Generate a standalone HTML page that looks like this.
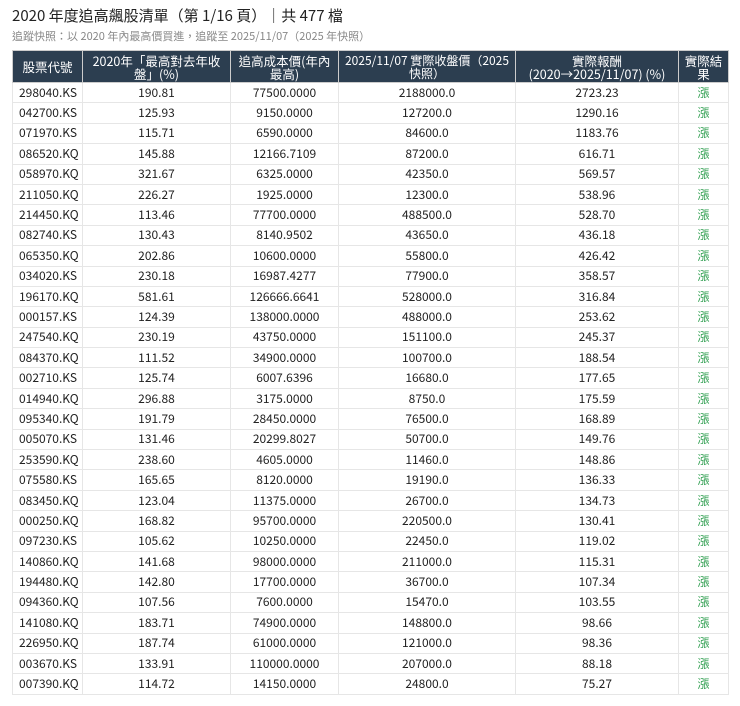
<!DOCTYPE html>
<html><head><meta charset="utf-8"><style>
body{margin:0;background:#fff;font-family:"Noto Sans CJK TC","Liberation Sans",sans-serif;color:#222;}
.t{position:absolute;left:12px;top:6px;font-size:15px;line-height:20px;color:#222;white-space:nowrap}
.s{position:absolute;left:12px;top:28px;font-size:11px;line-height:16px;color:#888;white-space:nowrap}
table{position:absolute;left:12px;top:50px;width:716px;border-collapse:collapse;font-size:12px;table-layout:fixed}
th{background:#2c3e50;color:#fff;font-weight:normal;height:32px;font-size:12.5px;line-height:13px;border:1px solid #ccc;padding:0;text-align:center;box-sizing:border-box;white-space:nowrap}
th.n{font-size:12px}
tr.r{height:20.4px}
td{border:1px solid #e6e6e6;text-align:center;padding:0;line-height:14px;box-sizing:border-box;overflow:hidden}
td:first-child{text-align:left;padding-left:6px}
td.g{color:#2e9e4f}
</style></head><body>
<div class="t">2020 年度追高飆股清單（第 1/16 頁）｜共 477 檔</div>
<div class="s">追蹤快照：以 2020 年內最高價買進，追蹤至 2025/11/07（2025 年快照）</div>
<table>
<colgroup><col style="width:70px"><col style="width:148px"><col style="width:108px"><col style="width:177px"><col style="width:163px"><col style="width:50px"></colgroup>
<tr><th>股票代號</th><th>2020年「最高對去年收<br>盤」(%)</th><th>追高成本價(年內<br>最高)</th><th class="n">2025/11/07 實際收盤價（2025<br>快照）</th><th>實際報酬<br>(2020→2025/11/07) (%)</th><th>實際結<br>果</th></tr>
<tr class="r"><td>298040.KS</td><td>190.81</td><td>77500.0000</td><td>2188000.0</td><td>2723.23</td><td class="g">漲</td></tr>
<tr class="r"><td>042700.KS</td><td>125.93</td><td>9150.0000</td><td>127200.0</td><td>1290.16</td><td class="g">漲</td></tr>
<tr class="r"><td>071970.KS</td><td>115.71</td><td>6590.0000</td><td>84600.0</td><td>1183.76</td><td class="g">漲</td></tr>
<tr class="r"><td>086520.KQ</td><td>145.88</td><td>12166.7109</td><td>87200.0</td><td>616.71</td><td class="g">漲</td></tr>
<tr class="r"><td>058970.KQ</td><td>321.67</td><td>6325.0000</td><td>42350.0</td><td>569.57</td><td class="g">漲</td></tr>
<tr class="r"><td>211050.KQ</td><td>226.27</td><td>1925.0000</td><td>12300.0</td><td>538.96</td><td class="g">漲</td></tr>
<tr class="r"><td>214450.KQ</td><td>113.46</td><td>77700.0000</td><td>488500.0</td><td>528.70</td><td class="g">漲</td></tr>
<tr class="r"><td>082740.KS</td><td>130.43</td><td>8140.9502</td><td>43650.0</td><td>436.18</td><td class="g">漲</td></tr>
<tr class="r"><td>065350.KQ</td><td>202.86</td><td>10600.0000</td><td>55800.0</td><td>426.42</td><td class="g">漲</td></tr>
<tr class="r"><td>034020.KS</td><td>230.18</td><td>16987.4277</td><td>77900.0</td><td>358.57</td><td class="g">漲</td></tr>
<tr class="r"><td>196170.KQ</td><td>581.61</td><td>126666.6641</td><td>528000.0</td><td>316.84</td><td class="g">漲</td></tr>
<tr class="r"><td>000157.KS</td><td>124.39</td><td>138000.0000</td><td>488000.0</td><td>253.62</td><td class="g">漲</td></tr>
<tr class="r"><td>247540.KQ</td><td>230.19</td><td>43750.0000</td><td>151100.0</td><td>245.37</td><td class="g">漲</td></tr>
<tr class="r"><td>084370.KQ</td><td>111.52</td><td>34900.0000</td><td>100700.0</td><td>188.54</td><td class="g">漲</td></tr>
<tr class="r"><td>002710.KS</td><td>125.74</td><td>6007.6396</td><td>16680.0</td><td>177.65</td><td class="g">漲</td></tr>
<tr class="r"><td>014940.KQ</td><td>296.88</td><td>3175.0000</td><td>8750.0</td><td>175.59</td><td class="g">漲</td></tr>
<tr class="r"><td>095340.KQ</td><td>191.79</td><td>28450.0000</td><td>76500.0</td><td>168.89</td><td class="g">漲</td></tr>
<tr class="r"><td>005070.KS</td><td>131.46</td><td>20299.8027</td><td>50700.0</td><td>149.76</td><td class="g">漲</td></tr>
<tr class="r"><td>253590.KQ</td><td>238.60</td><td>4605.0000</td><td>11460.0</td><td>148.86</td><td class="g">漲</td></tr>
<tr class="r"><td>075580.KS</td><td>165.65</td><td>8120.0000</td><td>19190.0</td><td>136.33</td><td class="g">漲</td></tr>
<tr class="r"><td>083450.KQ</td><td>123.04</td><td>11375.0000</td><td>26700.0</td><td>134.73</td><td class="g">漲</td></tr>
<tr class="r"><td>000250.KQ</td><td>168.82</td><td>95700.0000</td><td>220500.0</td><td>130.41</td><td class="g">漲</td></tr>
<tr class="r"><td>097230.KS</td><td>105.62</td><td>10250.0000</td><td>22450.0</td><td>119.02</td><td class="g">漲</td></tr>
<tr class="r"><td>140860.KQ</td><td>141.68</td><td>98000.0000</td><td>211000.0</td><td>115.31</td><td class="g">漲</td></tr>
<tr class="r"><td>194480.KQ</td><td>142.80</td><td>17700.0000</td><td>36700.0</td><td>107.34</td><td class="g">漲</td></tr>
<tr class="r"><td>094360.KQ</td><td>107.56</td><td>7600.0000</td><td>15470.0</td><td>103.55</td><td class="g">漲</td></tr>
<tr class="r"><td>141080.KQ</td><td>183.71</td><td>74900.0000</td><td>148800.0</td><td>98.66</td><td class="g">漲</td></tr>
<tr class="r"><td>226950.KQ</td><td>187.74</td><td>61000.0000</td><td>121000.0</td><td>98.36</td><td class="g">漲</td></tr>
<tr class="r"><td>003670.KS</td><td>133.91</td><td>110000.0000</td><td>207000.0</td><td>88.18</td><td class="g">漲</td></tr>
<tr class="r"><td>007390.KQ</td><td>114.72</td><td>14150.0000</td><td>24800.0</td><td>75.27</td><td class="g">漲</td></tr>
</table>
</body></html>
